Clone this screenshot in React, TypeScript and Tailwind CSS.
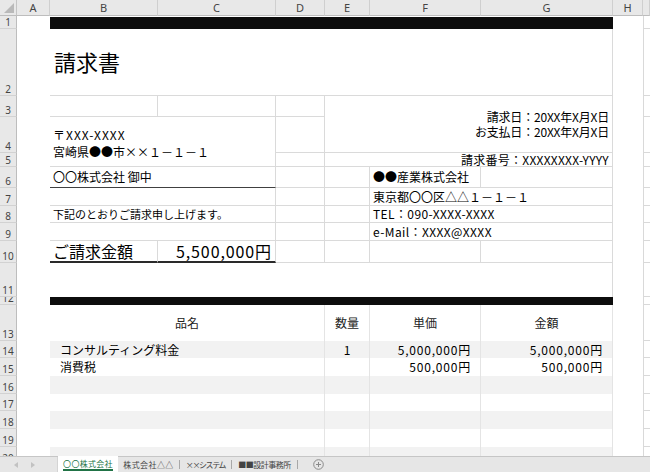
import React from "react";

const L = "border-[#dadada]";
const T = "border-[#e4e4e4]";

const rowStarts = [
  "row-start-2",
  "row-start-3",
  "row-start-4",
  "row-start-5",
  "row-start-6",
  "row-start-7",
  "row-start-8",
  "row-start-9",
  "row-start-10",
  "row-start-11",
  "row-start-12",
  "row-start-13",
  "row-start-14",
  "row-start-15",
  "row-start-16",
  "row-start-17",
  "row-start-18",
  "row-start-19",
  "row-start-20",
  "row-start-21",
];

const colHeaders = [
  { cls: "col-start-2", t: "A" },
  { cls: "col-start-3", t: "B" },
  { cls: "col-start-4", t: "C" },
  { cls: "col-start-5", t: "D" },
  { cls: "col-start-6", t: "E" },
  { cls: "col-start-7", t: "F" },
  { cls: "col-start-8", t: "G" },
  { cls: "col-start-9", t: "H" },
  { cls: "col-start-10", t: "" },
];

const tableRows = [
  { rs: "row-start-15", gray: true, name: "コンサルティング料金", qty: "1", price: "5,000,000円", amt: "5,000,000円" },
  { rs: "row-start-16", gray: false, name: "消費税", qty: "", price: "500,000円", amt: "500,000円" },
  { rs: "row-start-17", gray: true, name: "", qty: "", price: "", amt: "" },
  { rs: "row-start-18", gray: false, name: "", qty: "", price: "", amt: "" },
  { rs: "row-start-19", gray: true, name: "", qty: "", price: "", amt: "" },
  { rs: "row-start-20", gray: false, name: "", qty: "", price: "", amt: "" },
  { rs: "row-start-21", gray: true, name: "", qty: "", price: "", amt: "" },
];

export default function App() {
  return (
    <div className="w-[650px] h-[472px] overflow-hidden bg-white font-['Noto_Sans_CJK_JP',sans-serif] text-black">
      <div className="h-[456px] overflow-hidden">
        <div className="grid grid-cols-[17px_33px_108px_118px_49px_45px_111px_132px_30px_1fr] grid-rows-[16px_13px_67px_21px_36px_14px_21px_18px_17px_18px_22px_34px_8px_36px_17px_18px_18px_17px_18px_18px_18px]">
          {/* corner */}
          <div className="col-start-1 row-start-1 bg-[#e8e8e8] border-r border-b border-r-[#c4c4c4] border-b-[#bdbdbd] relative">
            <svg className="absolute right-[2px] bottom-[2px]" width="10" height="10" viewBox="0 0 10 10">
              <polygon points="10,0 10,10 0,10" fill="#b9b9b9" />
            </svg>
          </div>
          {colHeaders.map((c) => (
            <div
              key={c.cls}
              className={`${c.cls} row-start-1 bg-[#e8e8e8] border-r border-b border-r-[#cfcfcf] border-b-[#bdbdbd] flex items-center justify-center text-[11px] text-[#444] font-['Noto_Sans',sans-serif] leading-none`}
            >
              {c.t}
            </div>
          ))}
          {rowStarts.map((rs, i) => (
            <div
              key={rs}
              className={`col-start-1 ${rs} bg-[#e8e8e8] border-r border-b border-r-[#bdbdbd] border-b-[#d2d2d2] flex items-end justify-center overflow-hidden text-[10px] leading-[12px] text-[#444] font-['Noto_Sans',sans-serif]`}
            >
              {i + 1}
            </div>
          ))}
          {rowStarts.map((rs) => (
            <div key={"i" + rs} className={`col-start-10 ${rs} border-l border-b border-[#d9d9d9]`} />
          ))}

          {/* Row 1 black band */}
          <div className="col-start-3 col-span-6 row-start-2 bg-[#0d0d0d] mt-[1px]" />

          {/* Row 2 title */}
          <div className={`col-start-3 col-span-6 row-start-3 border-b border-r ${L} flex items-center pl-[4px] pb-[3px] text-[22px] leading-none`}>
            請求書
          </div>

          {/* Row 3 */}
          <div className={`col-start-3 row-start-4 border-b border-r ${L}`} />
          <div className={`col-start-4 row-start-4 border-b border-r ${L}`} />
          <div className={`col-start-5 row-start-4 border-b border-r ${L}`} />
          <div className={`col-start-6 col-span-3 row-start-4 row-span-2 border-b border-r ${L} flex flex-col justify-center items-end pr-[3px] text-[12px] leading-[15px] tracking-[-0.2px]`}>
            <div>請求日：20XX年X月X日</div>
            <div>お支払日：20XX年X月X日</div>
          </div>

          {/* Rows 4-5 */}
          <div className={`col-start-3 col-span-2 row-start-5 row-span-2 border-b border-r ${L} flex flex-col justify-center pl-[3px] pt-[2px] text-[12px] leading-[17px]`}>
            <div className="tracking-[1px]">〒XXX-XXXX</div>
            <div>宮崎県●●市××１－１－１</div>
          </div>
          <div className={`col-start-5 row-start-5 border-b border-r ${L}`} />
          <div className={`col-start-5 row-start-6 border-b border-r ${L}`} />
          <div className={`col-start-6 col-span-3 row-start-6 border-b border-r ${L} flex items-center justify-end pr-[3px] text-[12px] leading-none whitespace-nowrap tracking-[0.25px]`}>
            請求番号：XXXXXXXX-YYYY
          </div>

          {/* Row 6 */}
          <div className="col-start-3 col-span-2 row-start-7 border-b border-b-[#404040] border-r border-r-[#dadada] flex items-center pl-[3px] text-[12px] leading-none">
            〇〇株式会社 御中
          </div>
          <div className={`col-start-5 row-start-7 border-b border-r ${L}`} />
          <div className={`col-start-6 row-start-7 border-b border-r ${L}`} />
          <div className={`col-start-7 row-start-7 border-b border-r ${L} flex items-center pl-[3px] text-[12px] leading-none whitespace-nowrap`}>
            ●●産業株式会社
          </div>
          <div className={`col-start-8 row-start-7 border-b border-r ${L}`} />

          {/* Row 7 */}
          <div className={`col-start-3 col-span-2 row-start-8 border-b border-r ${L}`} />
          <div className={`col-start-5 row-start-8 border-b border-r ${L}`} />
          <div className={`col-start-6 row-start-8 border-b border-r ${L}`} />
          <div className={`col-start-7 col-span-2 row-start-8 border-b border-r ${L} flex items-center pl-[3px] text-[12px] leading-none whitespace-nowrap`}>
            東京都〇〇区△△１－１－１
          </div>

          {/* Row 8 */}
          <div className={`col-start-3 col-span-2 row-start-9 border-b border-r ${L} flex items-center pl-[3px] text-[11px] leading-none whitespace-nowrap`}>
            下記のとおりご請求申し上げます。
          </div>
          <div className={`col-start-5 row-start-9 border-b border-r ${L}`} />
          <div className={`col-start-6 row-start-9 border-b border-r ${L}`} />
          <div className={`col-start-7 col-span-2 row-start-9 border-b border-r ${L} flex items-center pl-[3px] text-[12px] leading-none whitespace-nowrap tracking-[0.4px]`}>
            TEL：090-XXXX-XXXX
          </div>

          {/* Row 9 */}
          <div className={`col-start-3 col-span-2 row-start-10 border-b border-r ${L}`} />
          <div className={`col-start-5 row-start-10 border-b border-r ${L}`} />
          <div className={`col-start-6 row-start-10 border-b border-r ${L}`} />
          <div className={`col-start-7 col-span-2 row-start-10 border-b border-r ${L} flex items-center pl-[3px] text-[12px] leading-none whitespace-nowrap tracking-[0.4px]`}>
            e-Mail：XXXX@XXXX
          </div>

          {/* Row 10 */}
          <div className="col-start-3 row-start-11 border-b-2 border-b-[#2a2a2a] border-r border-r-[#dadada] flex items-center pl-[3px] text-[16px] leading-none whitespace-nowrap">
            ご請求金額
          </div>
          <div className="col-start-4 row-start-11 border-b-2 border-b-[#2a2a2a] border-r border-r-[#dadada] flex items-center justify-end pr-[3px] text-[16px] leading-none whitespace-nowrap tracking-[0.9px]">
            5,500,000円
          </div>
          <div className={`col-start-5 row-start-11 border-b border-r ${L}`} />
          <div className={`col-start-6 row-start-11 border-b border-r ${L}`} />
          <div className={`col-start-7 row-start-11 border-b border-r ${L}`} />
          <div className={`col-start-8 row-start-11 border-b border-r ${L}`} />

          {/* Row 11 */}
          <div className={`col-start-3 col-span-6 row-start-12 border-r ${L}`} />

          {/* Row 12 black band */}
          <div className="col-start-3 col-span-6 row-start-13 bg-[#0d0d0d]" />

          {/* Row 13 header */}
          <div className={`col-start-3 col-span-3 row-start-14 border-r ${T} flex items-center justify-center text-[12px] leading-none text-[#222]`}>
            品名
          </div>
          <div className={`col-start-6 row-start-14 border-r ${T} flex items-center justify-center text-[12px] leading-none text-[#222]`}>
            数量
          </div>
          <div className={`col-start-7 row-start-14 border-r ${T} flex items-center justify-center text-[12px] leading-none text-[#222]`}>
            単価
          </div>
          <div className={`col-start-8 row-start-14 border-r ${T} flex items-center justify-center text-[12px] leading-none text-[#222]`}>
            金額
          </div>

          {/* Table rows */}
          {tableRows.map((r) => (
            <React.Fragment key={r.rs}>
              <div className={`col-start-3 col-span-3 ${r.rs} border-r ${T} ${r.gray ? "bg-[#f2f2f2]" : ""} flex items-center pl-[10px] text-[12px] leading-none whitespace-nowrap`}>
                {r.name}
              </div>
              <div className={`col-start-6 ${r.rs} border-r ${T} ${r.gray ? "bg-[#f2f2f2]" : ""} flex items-center justify-center text-[12px] leading-none`}>
                {r.qty}
              </div>
              <div className={`col-start-7 ${r.rs} border-r ${T} ${r.gray ? "bg-[#f2f2f2]" : ""} flex items-center justify-end pr-[9px] text-[12px] leading-none whitespace-nowrap tracking-[0.8px]`}>
                {r.price}
              </div>
              <div className={`col-start-8 ${r.rs} border-r ${T} ${r.gray ? "bg-[#f2f2f2]" : ""} flex items-center justify-end pr-[9px] text-[12px] leading-none whitespace-nowrap tracking-[0.8px]`}>
                {r.amt}
              </div>
            </React.Fragment>
          ))}
        </div>
      </div>

      {/* Sheet tab bar */}
      <div className="h-[16px] bg-[#e6e6e6] border-t border-[#c6c6c6] flex items-stretch text-[8px] leading-none text-[#444] whitespace-nowrap">
        <div className="w-[58px] flex items-center pl-[14px] gap-[13px] border-r border-[#d4d4d4]">
          <svg width="4" height="6" viewBox="0 0 4 6">
            <polygon points="4,0 4,6 0,3" fill="#c2c2c2" />
          </svg>
          <svg width="4" height="6" viewBox="0 0 4 6">
            <polygon points="0,0 0,6 4,3" fill="#c2c2c2" />
          </svg>
        </div>
        <div className="w-[60px] bg-white flex items-center justify-center text-[#217346] -mt-[1px]">
          <span className="border-b-2 border-[#217346] pb-[1px] pt-[2px] tracking-[0.3px]">〇〇株式会社</span>
        </div>
        <div className="w-[62px] flex items-center justify-center border-r border-[#a8a8a8] my-[3px] tracking-[0.4px]">株式会社△△</div>
        <div className="w-[52px] flex items-center justify-center border-r border-[#a8a8a8] my-[3px] tracking-[-1.4px]">××システム</div>
        <div className="w-[66px] flex items-center justify-center border-r border-[#a8a8a8] my-[3px] tracking-[-0.5px]">■■設計事務所</div>
        <div className="w-[40px] flex items-center justify-center">
          <svg width="11" height="11" viewBox="0 0 11 11">
            <circle cx="5.5" cy="5.5" r="4.8" fill="none" stroke="#8a8a8a" strokeWidth="1" />
            <line x1="5.5" y1="3" x2="5.5" y2="8" stroke="#8a8a8a" strokeWidth="1" />
            <line x1="3" y1="5.5" x2="8" y2="5.5" stroke="#8a8a8a" strokeWidth="1" />
          </svg>
        </div>
      </div>
    </div>
  );
}
